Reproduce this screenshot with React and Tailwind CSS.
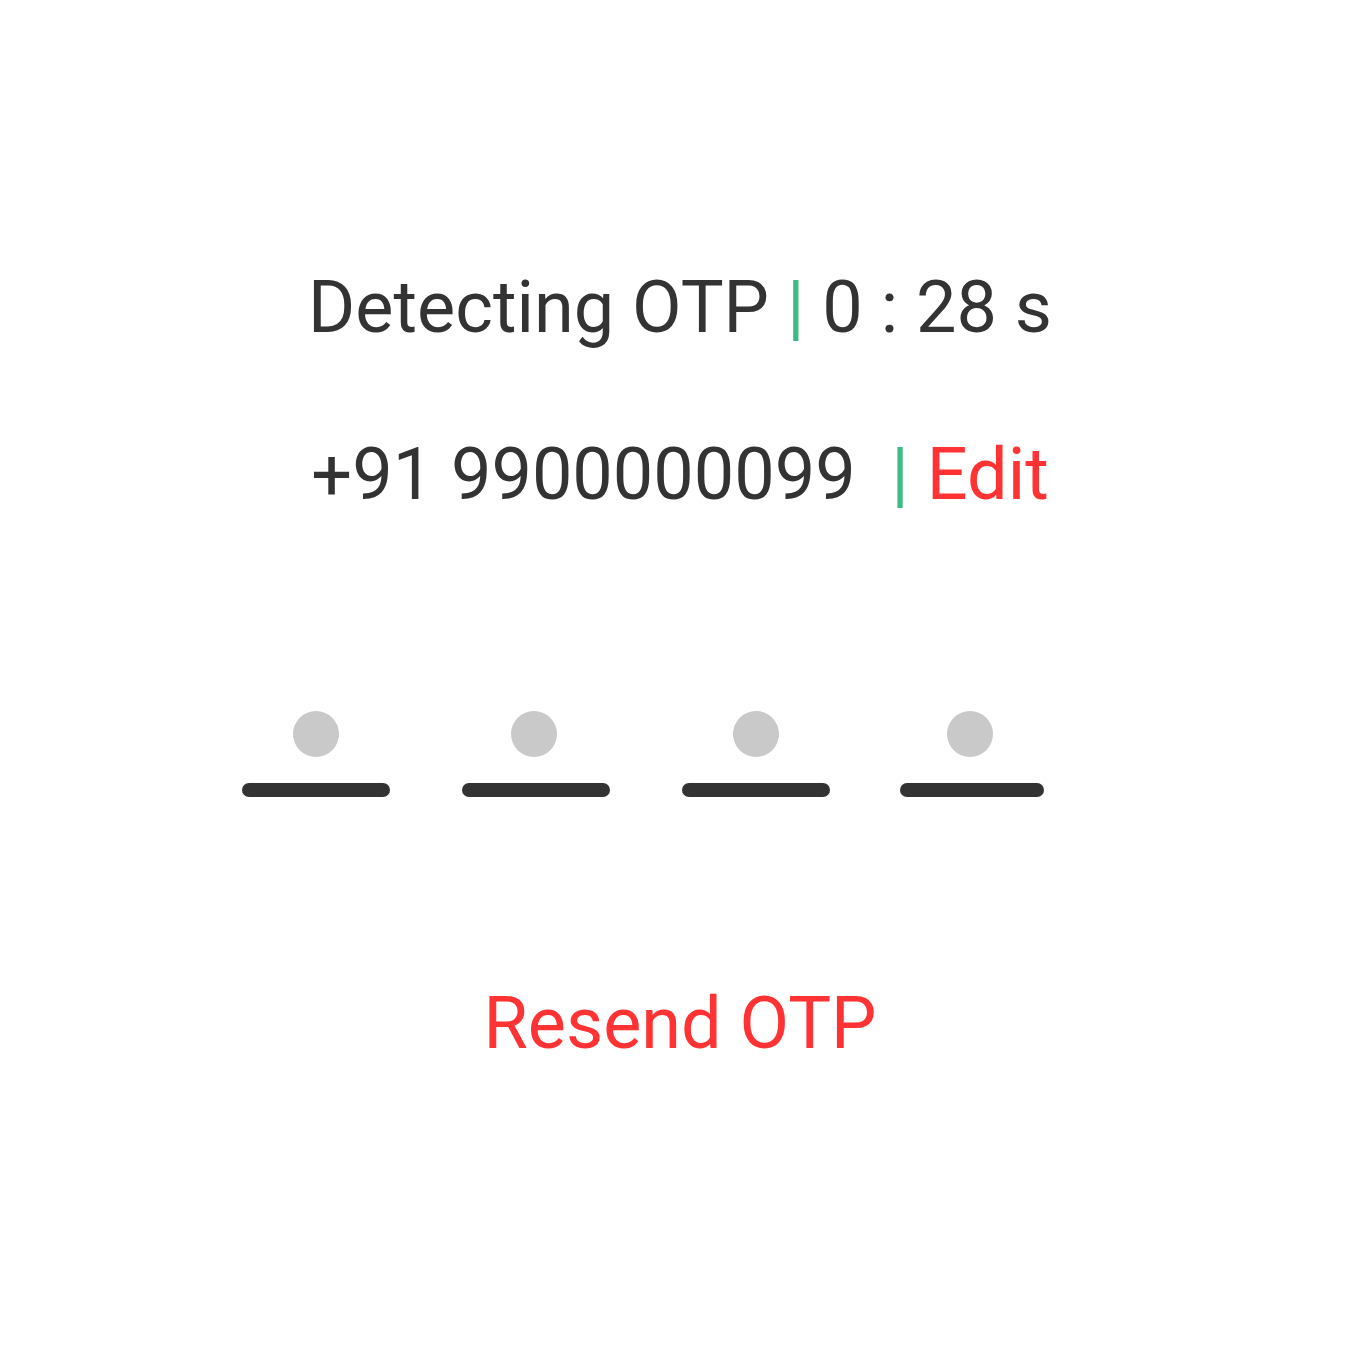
const SLOTS = [
  { key: 0, wrap: "w-[148px]", dot: "" },
  { key: 1, wrap: "w-[148px]", dot: "mr-[4px]" },
  { key: 2, wrap: "w-[148px]", dot: "" },
  { key: 3, wrap: "w-[144px] -ml-[2px]", dot: "mr-[4px]" },
];

function OtpSlot({ wrap, dot }) {
  return (
    <div className={`flex flex-col items-center ${wrap}`}>
      <div className={`h-[46px] w-[46px] rounded-full bg-[#c9c9c9] ${dot}`} />
      <div className="mt-[26px] h-[14px] w-full rounded-full bg-[#333333]" />
    </div>
  );
}

export default function App() {
  return (
    <div
      className="flex h-[1360px] w-[1360px] flex-col bg-white pt-[272px] text-[#333333]"
      style={{ fontFamily: "Roboto, 'Noto Sans', sans-serif" }}
    >
      <p className="whitespace-pre text-center text-[72px] leading-[72px]">
        Detecting OTP <span className="text-[#3dbb86]">|</span> 0 : 28 s
      </p>
      <p className="mt-[95px] whitespace-pre text-center text-[72px] leading-[72px]">
        +91 9900000099  <span className="text-[#3dbb86]">|</span> <span className="text-[#ff3333]">Edit</span>
      </p>
      <div className="mt-[200px] flex gap-[72px] pl-[242px]">
        {SLOTS.map(s => <OtpSlot key={s.key} wrap={s.wrap} dot={s.dot} />)}
      </div>
      <button className="mx-auto mt-[191px] text-[72px] leading-[72px] text-[#ff3333]">
        Resend OTP
      </button>
    </div>
  );
}
